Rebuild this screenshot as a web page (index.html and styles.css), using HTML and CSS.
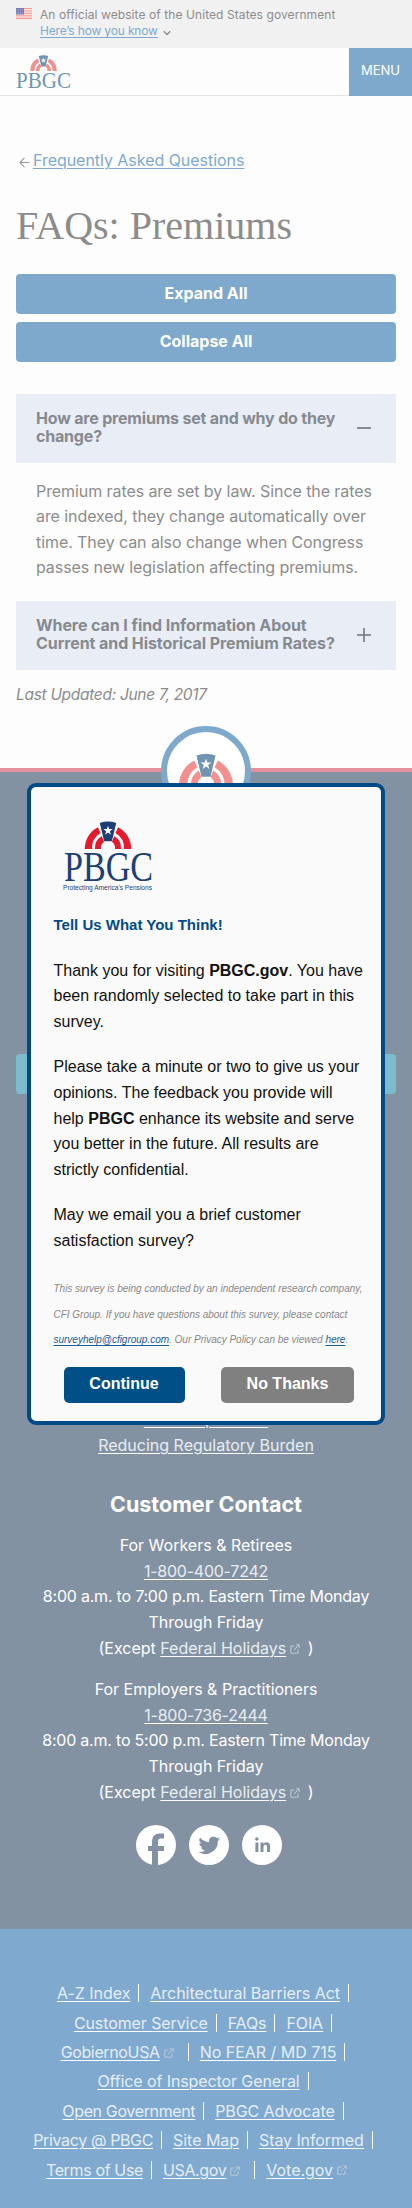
FILE: index.html
```html
<!DOCTYPE html>
<html lang="en">
<head>
<meta charset="utf-8">
<title>FAQs: Premiums | PBGC</title>
<link rel="stylesheet" href="styles.css">
</head>
<body>
<svg class="defs" width="0" height="0" aria-hidden="true">
  <symbol id="arch" viewBox="0 0 48 30">
    <path class="red" d="M0 29A25 25 0 0 1 13.500 6.500L16.300 12.500A18 18 0 0 0 7.500 29ZM48 29A25 25 0 0 0 34.500 6.500L31.700 12.500A18 18 0 0 1 40.500 29ZM10.500 29A15 15 0 0 1 17.500 15.500L20 21.500A8 8 0 0 0 16.800 29ZM37.500 29A15 15 0 0 0 30.500 15.500L28 21.500A8 8 0 0 1 31.200 29Z"/>
    <path class="navy" d="M15.500 2Q24-1 32.500 2L28 21H20Z"/>
    <path fill="#fff" d="M24 5l1.200 3.400h3.600l-2.900 2.200 1.100 3.600-3-2.200-3 2.200 1.100-3.600-2.900-2.200h3.600z"/>
  </symbol>
  <symbol id="ext" viewBox="0 0 10 10">
    <path fill="none" stroke="currentColor" d="M4.500 2H.8v7.200H8V5.500M6 .8h3.200V4M9 1L4 6"/>
  </symbol>
</svg>

<div class="banner">
  <svg class="flag" viewBox="0 0 16 11"><path fill="#fff" d="M0 0h16v11H0z"/><path stroke="#ee8e88" stroke-width=".9" d="M0 .5h16M0 2.200h16M0 3.900h16M0 5.600h16M0 7.300h16M0 9h16M0 10.600h16"/><path fill="#7377b8" d="M0 0h8v6.500H0z"/><path stroke="#c9cbe6" stroke-width=".7" stroke-dasharray=".8 1" d="M.6 1.200h7M.6 2.800h7M.6 4.400h7M.6 5.800h7"/></svg>
  <div>
    <p class="official">An official website of the United States government</p>
    <p class="know"><a>Here’s how you know</a> <svg class="chev" viewBox="0 0 8 6"><path d="M.8 1.200L4 4.400 7.200 1.200"/></svg></p>
  </div>
</div>

<header class="header">
  <svg class="logo faded" viewBox="0 0 55 35"><use href="#arch" x="13.500" y="0" width="28" height="16.500"/><text x="0" y="33" textLength="55" lengthAdjust="spacingAndGlyphs" font-size="22.500" class="navy">PBGC</text></svg>
  <button class="menu">MENU</button>
</header>

<main class="main">
  <p class="back"><svg viewBox="0 0 12 12"><path d="M11.500 6H1M6 1L1 6l5 5"/></svg><a>Frequently Asked Questions</a></p>
  <h1>FAQs: Premiums</h1>
  <button class="btn">Expand All</button>
  <button class="btn">Collapse All</button>
  <section class="accordion">
    <h4 class="q"><span class="q1">How are premiums set and why do they<br>change?</span><svg viewBox="0 0 14 14"><path d="M0 7h14"/></svg></h4>
    <p class="answer">Premium rates are set by law. Since the rates<br>are indexed, they change automatically over<br>time. They can also change when Congress<br>passes new legislation affecting premiums.</p>
    <h4 class="q"><span class="q2">Where can I find Information About<br>Current and Historical Premium Rates?</span><svg viewBox="0 0 14 14"><path d="M0 7h14M7 0v14"/></svg></h4>
  </section>
  <p class="updated">Last Updated: June 7, 2017</p>
</main>

<footer class="footer">
  <div class="seal faded"><svg viewBox="0 0 54 34"><use href="#arch" width="54" height="34"/></svg></div>
  <div class="subscribe"></div>
  <p class="foot-links"><a>PBGC Open Gov</a><br><a class="reducing">Reducing Regulatory Burden</a></p>
  <h3>Customer Contact</h3>
  <p class="contact">For Workers &amp; Retirees<br><a class="phone">1-800-400-7242</a><br><span class="hours">8:00 a.m. to 7:00 p.m. Eastern Time Monday</span><br>Through Friday<br>(Except <a>Federal Holidays</a><svg class="ext"><use href="#ext" width="10" height="10"/></svg> )</p>
  <p class="contact">For Employers &amp; Practitioners<br><a class="phone">1-800-736-2444</a><br><span class="hours">8:00 a.m. to 5:00 p.m. Eastern Time Monday</span><br>Through Friday<br>(Except <a>Federal Holidays</a><svg class="ext"><use href="#ext" width="10" height="10"/></svg> )</p>
  <div class="social">
    <svg viewBox="0 0 40 40"><circle cx="20" cy="20" r="20"/><path d="M16 40V26h-4v-5h4v-4.500Q16 8.500 24 8.500h4v5h-3.200q-2.800 0-2.800 3V21h6v5h-6v14z"/></svg>
    <svg viewBox="0 0 40 40"><circle cx="20" cy="20" r="20"/><path transform="translate(9.500 9.500) scale(.9)" d="M24 4.600a10 10 0 0 1-2.800.8 5 5 0 0 0 2.200-2.700 10 10 0 0 1-3.100 1.200 4.900 4.900 0 0 0-8.400 4.500A14 14 0 0 1 1.700 3.200a4.900 4.900 0 0 0 1.500 6.500 5 5 0 0 1-2.200-.6 4.900 4.900 0 0 0 4 4.900 5 5 0 0 1-2.300.1 4.900 4.900 0 0 0 4.600 3.400A10 10 0 0 1 0 19.500a14 14 0 0 0 21.500-12.400A10 10 0 0 0 24 4.600z"/></svg>
    <svg viewBox="0 0 40 40"><circle cx="20" cy="20" r="20"/><path d="M13.400 17.500h3V27h-3zM18.500 17.500h2.900v1.300q1-1.600 3.100-1.600 3.600 0 3.600 4.300V27h-3v-5q0-2.200-1.700-2.200-1.900 0-1.900 2.400V27h-3z"/><circle class="dot" cx="14.900" cy="14" r="1.800"/></svg>
  </div>
</footer>

<nav class="bottom">
  <div><a class="wide">A-Z Index</a><a class="wide">Architectural Barriers Act</a></div>
  <div><a>Customer Service</a><a>FAQs</a><a>FOIA</a></div>
  <div><a class="x tight">GobiernoUSA</a><svg class="ext bar"><use href="#ext" y="5" width="10" height="10"/></svg><a class="wide">No FEAR / MD 715</a></div>
  <div><a>Office of Inspector General</a></div>
  <div><a class="tight">Open Government</a><a>PBGC Advocate</a></div>
  <div><a class="tight">Privacy @ PBGC</a><a class="wide">Site Map</a><a>Stay Informed</a></div>
  <div><a class="tight">Terms of Use</a><a class="x tight">USA.gov</a><svg class="ext bar"><use href="#ext" y="5" width="10" height="10"/></svg><a class="x wide">Vote.gov</a><svg class="ext last"><use href="#ext" width="10" height="10"/></svg></div>
</nav>

<div class="modal" role="dialog">
  <svg class="modal-logo" viewBox="0 0 90 70"><use href="#arch" x="21" y="0" width="48" height="29"/><text x="1" y="60" textLength="89" lengthAdjust="spacingAndGlyphs" font-size="42" class="navy">PBGC</text><text class="tag navy" x="0" y="69" textLength="89" lengthAdjust="spacingAndGlyphs" font-size="7">Protecting America's Pensions</text></svg>
  <h2>Tell Us What You Think!</h2>
  <p>Thank you for visiting <b>PBGC.gov</b>. You have<br>been randomly selected to take part in this<br>survey.</p>
  <p>Please take a minute or two to give us your<br>opinions. The feedback you provide will<br>help <b>PBGC</b> enhance its website and serve<br>you better in the future. All results are<br>strictly confidential.</p>
  <p>May we email you a brief customer<br>satisfaction survey?</p>
  <p class="fine">This survey is being conducted by an independent research company,<br>CFI Group. If you have questions about this survey, please contact<br><a>surveyhelp@cfigroup.com</a>. Our Privacy Policy can be viewed <a>here</a>.</p>
  <div class="actions"><button class="yes">Continue</button><button class="no">No Thanks</button></div>
</div>
</body>
</html>
```
FILE: styles.css
```css
* { box-sizing: border-box; }
body { --red: #e31b2d; --navy: #1c3f75; margin: 0; position: relative; width: 412px; height: 2208px; overflow: hidden; background: #fdfdfd; color: #8c8c8c; font: 16px/25.6px Inter, sans-serif; white-space: nowrap; }
p, h1, h2, h3, h4 { margin: 0; }
a { text-decoration: underline; text-underline-offset: 2px; text-decoration-thickness: 1px; }
button { border: 0; padding: 0; font: inherit; color: #fff; }
svg { display: block; overflow: visible; }
.defs { position: absolute; }
.red { fill: var(--red); }
.navy { fill: var(--navy); }
.faded { --red: #f28f8f; --navy: #7195b0; }

.banner { display: flex; height: 48px; padding: 7px 16px 0; gap: 8px; background: #f1f1f1; font-size: 12px; line-height: 16px; }
.flag { width: 16px; height: 11px; margin-top: 1px; }
.official { letter-spacing: .08px; }
.know { display: flex; align-items: center; gap: 5px; color: #7fa9cf; letter-spacing: -.16px; }
.chev { width: 8px; height: 6px; margin-top: 3px; }
.chev path { fill: none; stroke: #8c8c8c; stroke-width: 1.4; }

.header { display: flex; justify-content: space-between; height: 48px; padding-left: 16px; border-bottom: 1px solid #e4e4e4; }
.logo { width: 55px; height: 35px; margin-top: 7px; }
.logo text, .modal-logo text { font-family: "Liberation Serif", serif; }
.menu { width: 63px; height: 48px; padding-bottom: 2px; background: #7fa9cc; font-size: 13px; }

.main { height: 672px; padding: 52px 16px 0; }
.back { display: flex; align-items: center; gap: 3px; padding-left: 3px; height: 26px; color: #7fa9cf; letter-spacing: -.04px; }
.back svg { width: 11px; height: 11px; margin-top: 3px; }
.back path { fill: none; stroke: #999; stroke-width: 1.2; }
h1 { margin: 28px 0 24px; font: 40px/48px "Liberation Serif", serif; }
.btn { display: block; width: 380px; height: 40px; margin-bottom: 8px; border-radius: 4px; background: #7fa9cc; font-weight: 700; }
.accordion { margin-top: 32px; }
.q { display: flex; justify-content: space-between; height: 69px; padding: 15px 25px 0 20px; background: #e9eef6; color: #868a91; font-size: 16px; line-height: 18.4px; }
.q1 { letter-spacing: -.19px; }
.q2 { letter-spacing: -.08px; }
.q svg { width: 14px; height: 14px; margin-top: 12px; }
.q path { stroke: #70757c; stroke-width: 1.6; }
.answer { padding: 15.5px 20px 20.100px; letter-spacing: -.08px; }
.updated { margin-top: 12px; font-size: 15.5px; font-style: italic; letter-spacing: -.3px; }

.footer { display: flex; flex-direction: column; align-items: center; height: 1161px; border-top: 4px solid #e78f9c; background: #8392a3; color: #fff; text-align: center; }
.footer a { color: #e8edf2; text-decoration-color: #fff; }
.seal { flex: none; width: 90px; height: 90px; margin-top: -46px; padding: 21px 12px; border: 6px solid #7fa9cc; border-radius: 50%; background: #fff; }
.seal svg { width: 54px; height: 34px; }
.subscribe { flex: none; width: 380px; height: 40px; margin: 238px 0 313px; border-radius: 4px; background: #7dbbce; }
.footer h3 { margin: 31px 0 14px; font-size: 21.5px; line-height: 30px; }
.contact { margin-bottom: 16px; }
.phone { letter-spacing: -.25px; }
.hours { letter-spacing: -.21px; }
.ext { display: inline-block; width: 10px; height: 10px; margin: 0 3px 0 4px; color: #bdc9d5; }
.social { display: flex; gap: 13px; margin-top: 4px; padding-left: 6px; }
.social svg { width: 40px; height: 40px; fill: #8392a3; }
.social circle { fill: #fff; }
.social .dot { fill: #8392a3; }

.bottom { height: 279px; padding-top: 49.500px; background: #7fa9cf; color: #e5eef6; letter-spacing: -.1px; }
.bottom div { display: flex; align-items: center; justify-content: center; height: 29.400px; }
.bottom a { display: flex; height: 18px; line-height: 18px; margin-right: 11px; padding-right: 8px; border-right: 1px solid #fff; text-decoration-color: #fff; }
.bottom a:last-child { margin-right: 6px; }
.bottom a.x { padding: 0; margin: 0; border: 0; }
.tight { letter-spacing: -.36px; }
.wide { letter-spacing: -.03px; }
.bottom .bar { width: 25px; height: 18px; margin-right: 11px; border-right: 1px solid #fff; }
.bottom .last { margin-right: 19px; }

.modal { position: absolute; left: 27px; top: 783px; width: 358px; height: 642px; padding: 34px 22px 0 22.500px; border: 4px solid #004b87; border-radius: 9px; background: #fafafa; color: #111; font-family: "Liberation Sans", sans-serif; }
.modal-logo { width: 90px; height: 70px; margin-left: 9.500px; }
.modal-logo .tag { font-family: "Liberation Sans", sans-serif; }
.modal h2 { margin: 21px 0 20px; color: #004b87; font-size: 15px; line-height: 25.6px; }
.modal p { margin-bottom: 20px; }
.modal .fine { margin: 22.5px 0 14px; color: #888; font-size: 10px; font-style: italic; letter-spacing: -.01px; }
.fine a { color: #1b5b96; }
.actions { display: flex; justify-content: space-between; padding: 0 4px 0 10px; }
.actions button { height: 36px; padding-bottom: 2px; border-radius: 5px; font-weight: 700; }
.yes { width: 121px; background: #004f87; }
.no { width: 133px; margin-right: 1px; background: #808080; }
```
